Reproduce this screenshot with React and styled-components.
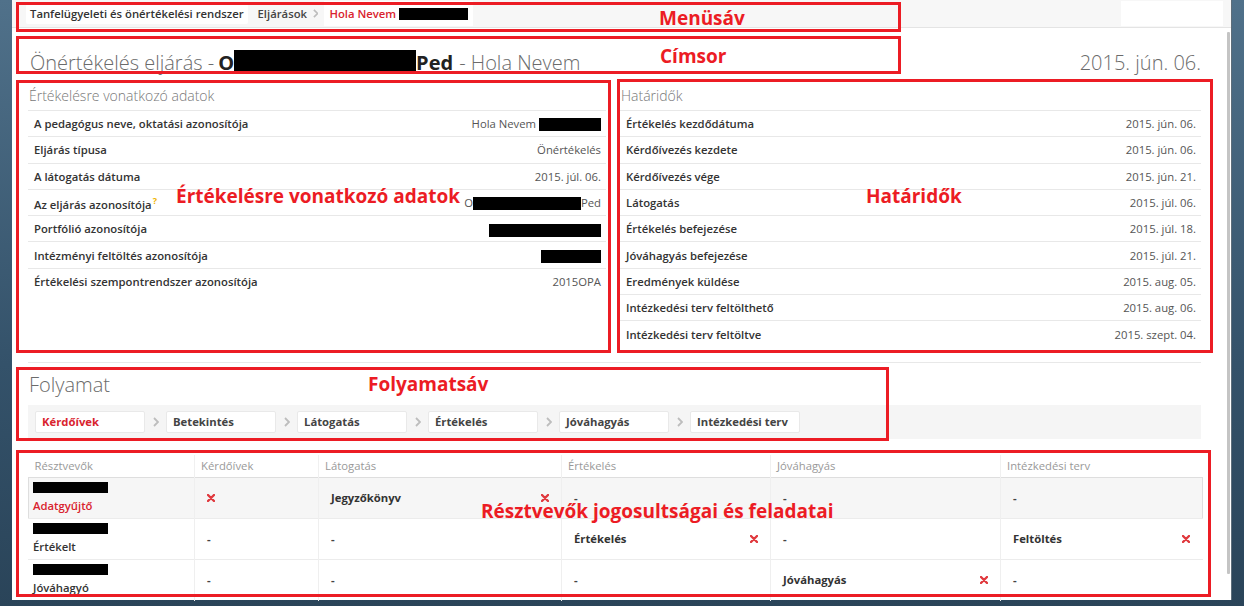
import React from 'react'
import styled, { createGlobalStyle } from 'styled-components'

const colors = {
  text: '#333',
  value: '#555',
  muted: '#6b6b6b',
  head: '#999',
  line: '#e8e8e8',
  red: '#d9232e',
  note: '#ec1c24',
  bar: '#f7f7f7',
  cross: '#e0393e'
}

const baseSize = '11.3px'

const GlobalStyle = createGlobalStyle`
  body {
    margin: 0;
    font-family: "Open Sans", "Liberation Sans", sans-serif;
    font-size: ${baseSize};
    color: ${colors.text};
  }
`

const deadlines = [
  ['Értékelés kezdődátuma', '2015. jún. 06.'],
  ['Kérdőívezés kezdete', '2015. jún. 06.'],
  ['Kérdőívezés vége', '2015. jún. 21.'],
  ['Látogatás', '2015. júl. 06.'],
  ['Értékelés befejezése', '2015. júl. 18.'],
  ['Jóváhagyás befejezése', '2015. júl. 21.'],
  ['Eredmények küldése', '2015. aug. 05.'],
  ['Intézkedési terv feltölthető', '2015. aug. 06.'],
  ['Intézkedési terv feltöltve', '2015. szept. 04.']
]

const steps = ['Kérdőívek', 'Betekintés', 'Látogatás', 'Értékelés', 'Jóváhagyás', 'Intézkedési terv']

const columns = [
  ['Résztvevők', 166],
  ['Kérdőívek', 124],
  ['Látogatás', 243],
  ['Értékelés', 209],
  ['Jóváhagyás', 230],
  ['Intézkedési terv', 202]
]

// each cell: null = "-", { task } = bold task, { cross } = remove icon
const participants = [
  { role: 'Adatgyűjtő', lead: true, cells: [{ cross: true }, { task: 'Jegyzőkönyv', cross: true }, null, null, null] },
  { role: 'Értékelt', cells: [null, null, { task: 'Értékelés', cross: true }, null, { task: 'Feltöltés', cross: true }] },
  { role: 'Jóváhagyó', cells: [null, null, null, { task: 'Jóváhagyás', cross: true }, null] }
]

const notes = [
  { label: 'Menüsáv', x: 16, y: 2, w: 885, h: 30, lx: 640, ly: 13 },
  { label: 'Címsor', x: 16, y: 36, w: 885, h: 38, lx: 641, ly: 17 },
  { label: 'Értékelésre vonatkozó adatok', x: 16, y: 80, w: 595, h: 273, lx: 157, ly: 113 },
  { label: 'Határidők', x: 617, y: 79, w: 596, h: 274, lx: 246, ly: 114 },
  { label: 'Folyamatsáv', x: 16, y: 367, w: 873, h: 74, lx: 349, ly: 14 },
  { label: 'Résztvevők jogosultságai és feladatai', x: 16, y: 450, w: 1195, h: 147, lx: 462, ly: 58 }
]

function Chevron ({ size = 10 }) {
  return (
    <svg width={size * 0.6} height={size} viewBox="0 0 6 10">
      <path d="M1 1 L5 5 L1 9" fill="none" stroke="#bdbdbd" strokeWidth="1.8" />
    </svg>
  )
}

function Cross () {
  return (
    <svg width="8" height="8" viewBox="0 0 8 8">
      <path d="M1 1 L7 7 M7 1 L1 7" stroke={colors.cross} strokeWidth="2.4" strokeLinecap="round" />
    </svg>
  )
}

function InfoPanel ({ title, rows }) {
  return (
    <section>
      <PanelTitle>{title}</PanelTitle>
      <InfoTable>
        <tbody>
          {rows.map(([label, value], i) => (
            <tr key={i}>
              <InfoLabel>{label}</InfoLabel>
              <InfoValue>{value}</InfoValue>
            </tr>
          ))}
        </tbody>
      </InfoTable>
    </section>
  )
}

function App () {
  const details = [
    ['A pedagógus neve, oktatási azonosítója', <>Hola Nevem <Redacted $w={62} /></>],
    ['Eljárás típusa', 'Önértékelés'],
    ['A látogatás dátuma', '2015. júl. 06.'],
    [<>Az eljárás azonosítója<Hint>?</Hint></>, <>O<Redacted $w={108} />Ped</>],
    ['Portfólió azonosítója', <Redacted $w={112} />],
    ['Intézményi feltöltés azonosítója', <Redacted $w={60} />],
    ['Értékelési szempontrendszer azonosítója', '2015OPA']
  ]

  return (
    <Page>
      <GlobalStyle />
      <Window>
        <MenuBar>
          <HomeCrumb>Tanfelügyeleti és önértékelési rendszer</HomeCrumb>
          <Crumb>Eljárások</Crumb>
          <Chevron size={9} />
          <CurrentCrumb>Hola Nevem <Redacted $w={69} $h={12} /></CurrentCrumb>
          <Spacer />
          <SearchBox />
        </MenuBar>
        <Body>
          <Main>
            <TitleRow>
              <Title>
                Önértékelés eljárás - <strong>O<Redacted $w={182} $h={24} />Ped</strong> - Hola Nevem
              </Title>
              <TitleDate>2015. jún. 06.</TitleDate>
            </TitleRow>

            <Panels>
              <InfoPanel title="Értékelésre vonatkozó adatok" rows={details} />
              <InfoPanel title="Határidők" rows={deadlines} />
            </Panels>

            <Rule />

            <SectionTitle>Folyamat</SectionTitle>
            <StepsBar>
              {steps.map((step, i) => (
                <React.Fragment key={step}>
                  {i > 0 && <StepArrow><Chevron /></StepArrow>}
                  <Step $active={i === 0}>{step}</Step>
                </React.Fragment>
              ))}
            </StepsBar>

            <Grid>
              <colgroup>
                {columns.map(([name, width]) => <col key={name} width={width} />)}
              </colgroup>
              <thead>
                <tr>
                  {columns.map(([name]) => <HeadCell key={name}>{name}</HeadCell>)}
                </tr>
              </thead>
              <tbody>
                {participants.map(p => (
                  <GridRow key={p.role} $highlight={p.lead}>
                    <PersonCell>
                      <Redacted $w={75} $h={11} $block />
                      <Role $lead={p.lead}>{p.role}</Role>
                    </PersonCell>
                    {p.cells.map((cell, i) => (
                      <TaskCell key={i}>
                        <TaskInner>
                          {cell && cell.task ? <Task>{cell.task}</Task> : cell ? null : <Dash>-</Dash>}
                          {cell && cell.cross && <Cross />}
                        </TaskInner>
                      </TaskCell>
                    ))}
                  </GridRow>
                ))}
              </tbody>
            </Grid>
          </Main>
          <ScrollTrack>
            <ScrollThumb />
          </ScrollTrack>
        </Body>
      </Window>

      {notes.map(n => (
        <Note key={n.label} $x={n.x} $y={n.y} $w={n.w} $h={n.h}>
          <NoteLabel $lx={n.lx} $ly={n.ly}>{n.label}</NoteLabel>
        </Note>
      ))}
    </Page>
  )
}

export default App

const Page = styled.div`
  position: relative;
  width: 1244px;
  height: 606px;
  overflow: hidden;
  box-sizing: border-box;
  padding-left: 12px;
  background: linear-gradient(180deg, #50718a 0%, #34526a 60%, #2a4459 100%);
`

const Window = styled.div`
  width: 1220px;
  height: 600px;
  background: #fff;
  display: flex;
  flex-direction: column;
  box-sizing: border-box;
  border-right: 1px solid #5d6d7a;
`

const MenuBar = styled.div`
  height: 28px;
  flex: none;
  box-sizing: border-box;
  display: flex;
  align-items: center;
  padding: 0 8px 0 14px;
  background: ${colors.bar};
  border-bottom: 1px solid #e4e4e4;
`

const HomeCrumb = styled.span`
  display: flex;
  align-items: center;
  height: 20px;
  padding: 0 4px;
  background: #fff;
  border-radius: 2px;
  font-weight: 600;
  color: ${colors.text};
`

const Crumb = styled.span`
  margin: 0 6px 0 10px;
  font-weight: 600;
  color: #444;
`

const CurrentCrumb = styled.span`
  display: flex;
  align-items: center;
  gap: 3px;
  height: 25px;
  margin-left: 6px;
  padding: 0 5px;
  background: #fff;
  color: ${colors.red};
  font-weight: 600;
`

const Spacer = styled.div`
  flex: 1;
`

const SearchBox = styled.div`
  width: 102px;
  height: 25px;
  background: #fff;
`

const Body = styled.div`
  flex: 1;
  display: flex;
  min-height: 0;
`

const Main = styled.main`
  flex: 1;
  padding: 0 20px 0 16px;
  min-width: 0;
`

const ScrollTrack = styled.div`
  width: 10px;
  display: flex;
  justify-content: flex-end;
  padding: 4px 1px 0 0;
  box-sizing: border-box;
`

const ScrollThumb = styled.div`
  width: 3px;
  height: 542px;
  background: #c4c4c4;
  border-radius: 1px;
`

const TitleRow = styled.div`
  display: flex;
  align-items: center;
  justify-content: space-between;
  padding: 20px 0 0 2px;
  height: 28px;
  margin-bottom: 3px;
`

const Title = styled.h1`
  margin: 0;
  font-size: 20px;
  font-weight: 300;
  color: ${colors.muted};
  white-space: nowrap;
  display: flex;
  align-items: center;

  strong {
    display: inline-flex;
    align-items: center;
    font-weight: 700;
    color: #222;
    margin: 0 6px 0 4px;
  }
`

const TitleDate = styled.div`
  font-size: 20px;
  font-weight: 300;
  color: ${colors.muted};
`

const Panels = styled.div`
  display: grid;
  grid-template-columns: 578px 1fr;
  gap: 14px;
`

const PanelTitle = styled.h2`
  margin: 0;
  padding: 7px 0 4px 1px;
  line-height: 20px;
  font-size: 14px;
  font-weight: 300;
  color: #777;
`

const InfoTable = styled.table`
  width: 100%;
  border-collapse: collapse;
`

const InfoLabel = styled.td`
  height: 25.3px;
  padding: 0 6px;
  border-top: 1px solid ${colors.line};
  font-weight: 600;
  color: ${colors.text};
  white-space: nowrap;
`

const InfoValue = styled.td`
  padding: 0 5px;
  border-top: 1px solid ${colors.line};
  text-align: right;
  color: ${colors.value};
  white-space: nowrap;
`

const Hint = styled.sup`
  color: #f0b400;
  font-size: 9px;
  font-weight: 700;
  margin-left: 1px;
`

const Redacted = styled.span`
  display: ${p => (p.$block ? 'block' : 'inline-block')};
  width: ${p => p.$w}px;
  height: ${p => p.$h || 13}px;
  background: #000;
  vertical-align: middle;
`

const Rule = styled.hr`
  margin: 15px 0 0;
  border: 0;
  border-top: 1px solid ${colors.line};
`

const SectionTitle = styled.h2`
  margin: 10px 0 0 1px;
  line-height: 24px;
  font-size: 20px;
  font-weight: 300;
  color: ${colors.muted};
`

const StepsBar = styled.div`
  display: flex;
  align-items: center;
  margin-top: 8px;
  height: 34px;
  padding: 0 7px;
  background: #f5f5f5;
`

const Step = styled.div`
  flex: none;
  width: 110px;
  height: 22px;
  box-sizing: border-box;
  display: flex;
  align-items: center;
  padding: 0 6px;
  background: #fff;
  border: 1px solid #e9e9e9;
  border-radius: 2px;
  font-weight: 700;
  white-space: nowrap;
  color: ${p => (p.$active ? colors.red : '#444')};
`

const StepArrow = styled.div`
  width: 21px;
  display: flex;
  justify-content: center;
`

const Grid = styled.table`
  margin-top: 16px;
  width: 100%;
  table-layout: fixed;
  border-collapse: collapse;
`

const HeadCell = styled.th`
  height: 22px;
  padding: 0 6px;
  text-align: left;
  font-weight: 400;
  color: ${colors.head};
  border-left: 1px solid #f0f0f0;
  &:first-child { border-left: 0; }
`

const GridRow = styled.tr`
  background: ${p => (p.$highlight ? '#f6f6f6' : '#fff')};
  border: 1px solid ${p => (p.$highlight ? '#dedede' : 'transparent')};
  border-bottom-color: #ececec;
  &:last-child { border-bottom-color: transparent; }
`

const PersonCell = styled.td`
  height: 41px;
  padding: 0 5px 0 4px;
  box-sizing: border-box;
`

const Role = styled.div`
  margin-top: 5px;
  line-height: 16px;
  font-weight: 600;
  color: ${p => (p.$lead ? colors.red : colors.text)};
`

const TaskCell = styled.td`
  padding: 0 12px;
  border-left: 1px solid #efefef;
`

const TaskInner = styled.div`
  display: flex;
  align-items: center;
  justify-content: space-between;
`

const Task = styled.span`
  font-weight: 700;
  color: ${colors.text};
`

const Dash = styled.span`
  font-weight: 700;
  color: #444;
`

const Note = styled.div`
  position: absolute;
  left: ${p => p.$x}px;
  top: ${p => p.$y}px;
  width: ${p => p.$w}px;
  height: ${p => p.$h}px;
  box-sizing: border-box;
  border: 3px solid ${colors.note};
  pointer-events: none;
`

const NoteLabel = styled.span`
  position: absolute;
  left: ${p => p.$lx}px;
  top: ${p => p.$ly}px;
  transform: translateY(-50%);
  font-family: "Open Sans", "Liberation Sans", sans-serif;
  font-size: 19px;
  font-weight: 700;
  color: ${colors.note};
  white-space: nowrap;
  line-height: 1;
`
